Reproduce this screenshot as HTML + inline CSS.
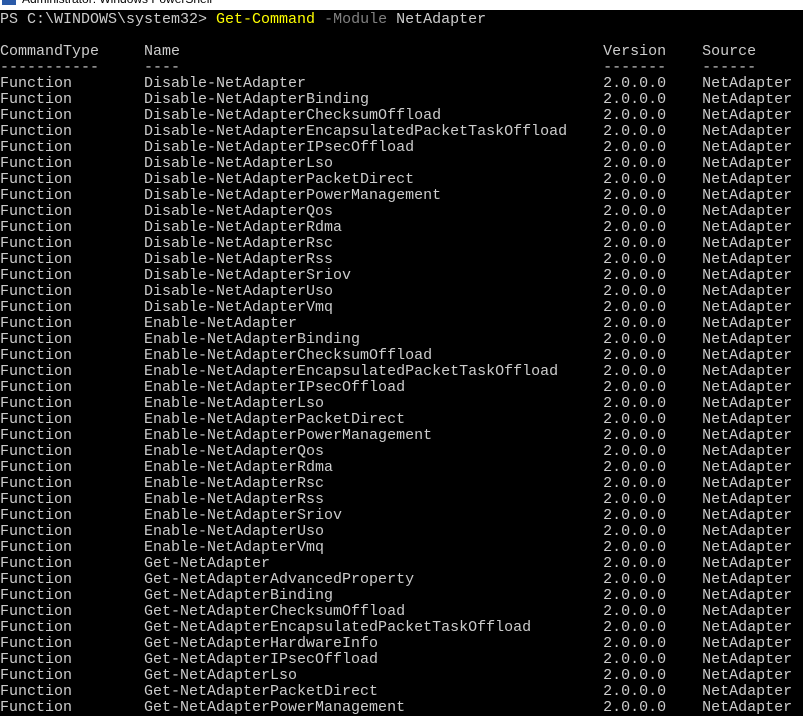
<!DOCTYPE html>
<html><head><meta charset="utf-8"><style>
html,body{margin:0;padding:0;width:803px;height:716px;overflow:hidden;background:#000;}
.tb{position:absolute;left:0;top:0;width:803px;height:10px;background:#fff;overflow:hidden;}
.tb span{position:absolute;left:22px;top:-8px;font:12px "Liberation Sans",sans-serif;color:#000;}
.tb i{position:absolute;left:2px;top:-6px;width:14px;height:11px;background:#2a5aa8;}
pre{position:absolute;left:0;top:12px;margin:0;font:15px/16px "Liberation Mono",monospace;color:#cccccc;letter-spacing:0;}
.y{color:#ffff00}.g{color:#808080}
</style></head><body>
<div class="tb"><i></i><span>Administrator: Windows PowerShell</span></div>
<pre>PS C:\WINDOWS\system32&gt; <span class="y">Get-Command</span> <span class="g">-Module</span> NetAdapter

CommandType     Name                                               Version    Source
-----------     ----                                               -------    ------
Function        Disable-NetAdapter                                 2.0.0.0    NetAdapter
Function        Disable-NetAdapterBinding                          2.0.0.0    NetAdapter
Function        Disable-NetAdapterChecksumOffload                  2.0.0.0    NetAdapter
Function        Disable-NetAdapterEncapsulatedPacketTaskOffload    2.0.0.0    NetAdapter
Function        Disable-NetAdapterIPsecOffload                     2.0.0.0    NetAdapter
Function        Disable-NetAdapterLso                              2.0.0.0    NetAdapter
Function        Disable-NetAdapterPacketDirect                     2.0.0.0    NetAdapter
Function        Disable-NetAdapterPowerManagement                  2.0.0.0    NetAdapter
Function        Disable-NetAdapterQos                              2.0.0.0    NetAdapter
Function        Disable-NetAdapterRdma                             2.0.0.0    NetAdapter
Function        Disable-NetAdapterRsc                              2.0.0.0    NetAdapter
Function        Disable-NetAdapterRss                              2.0.0.0    NetAdapter
Function        Disable-NetAdapterSriov                            2.0.0.0    NetAdapter
Function        Disable-NetAdapterUso                              2.0.0.0    NetAdapter
Function        Disable-NetAdapterVmq                              2.0.0.0    NetAdapter
Function        Enable-NetAdapter                                  2.0.0.0    NetAdapter
Function        Enable-NetAdapterBinding                           2.0.0.0    NetAdapter
Function        Enable-NetAdapterChecksumOffload                   2.0.0.0    NetAdapter
Function        Enable-NetAdapterEncapsulatedPacketTaskOffload     2.0.0.0    NetAdapter
Function        Enable-NetAdapterIPsecOffload                      2.0.0.0    NetAdapter
Function        Enable-NetAdapterLso                               2.0.0.0    NetAdapter
Function        Enable-NetAdapterPacketDirect                      2.0.0.0    NetAdapter
Function        Enable-NetAdapterPowerManagement                   2.0.0.0    NetAdapter
Function        Enable-NetAdapterQos                               2.0.0.0    NetAdapter
Function        Enable-NetAdapterRdma                              2.0.0.0    NetAdapter
Function        Enable-NetAdapterRsc                               2.0.0.0    NetAdapter
Function        Enable-NetAdapterRss                               2.0.0.0    NetAdapter
Function        Enable-NetAdapterSriov                             2.0.0.0    NetAdapter
Function        Enable-NetAdapterUso                               2.0.0.0    NetAdapter
Function        Enable-NetAdapterVmq                               2.0.0.0    NetAdapter
Function        Get-NetAdapter                                     2.0.0.0    NetAdapter
Function        Get-NetAdapterAdvancedProperty                     2.0.0.0    NetAdapter
Function        Get-NetAdapterBinding                              2.0.0.0    NetAdapter
Function        Get-NetAdapterChecksumOffload                      2.0.0.0    NetAdapter
Function        Get-NetAdapterEncapsulatedPacketTaskOffload        2.0.0.0    NetAdapter
Function        Get-NetAdapterHardwareInfo                         2.0.0.0    NetAdapter
Function        Get-NetAdapterIPsecOffload                         2.0.0.0    NetAdapter
Function        Get-NetAdapterLso                                  2.0.0.0    NetAdapter
Function        Get-NetAdapterPacketDirect                         2.0.0.0    NetAdapter
Function        Get-NetAdapterPowerManagement                      2.0.0.0    NetAdapter</pre>
</body></html>
